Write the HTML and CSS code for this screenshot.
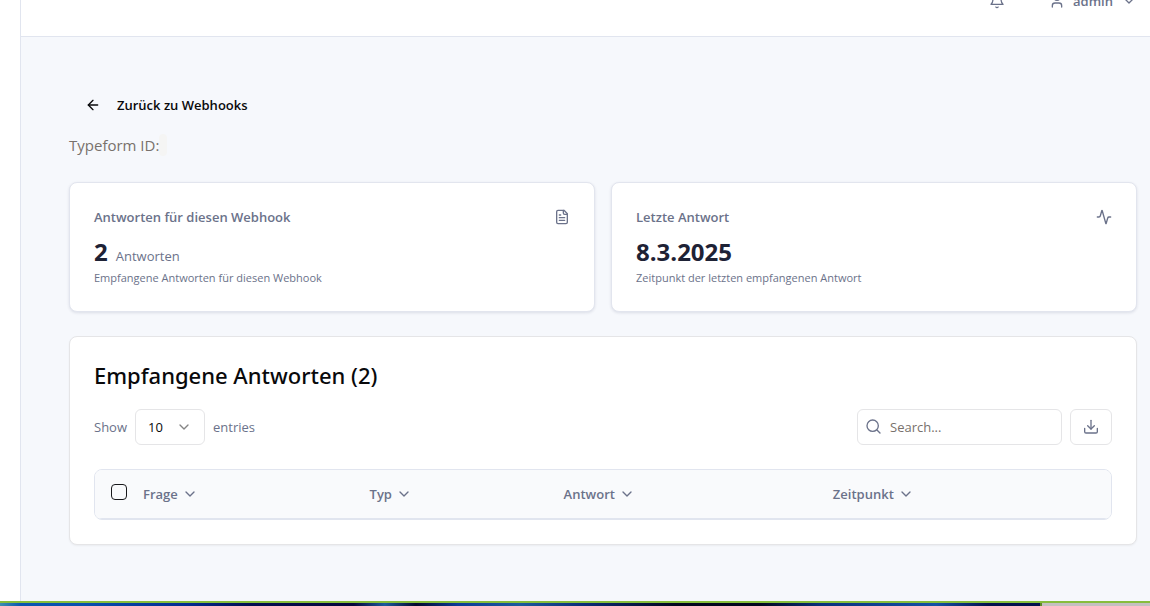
FILE: index.html
```html
<!DOCTYPE html>
<html lang="de">
<head>
<meta charset="utf-8">
<meta name="viewport" content="width=device-width, initial-scale=1">
<title>Webhook Antworten</title>
<link rel="stylesheet" href="styles.css">
</head>
<body>
<div class="app">
  <aside class="sidebar"></aside>
  <div class="content">
    <header class="topbar">
      <button class="bell" type="button" aria-label="Benachrichtigungen">
        <svg class="icon" viewBox="0 0 24 24"><path d="M6 8a6 6 0 0 1 12 0c0 7 3 9 3 9H3s3-2 3-9"/><path d="M10.3 21a1.94 1.94 0 0 0 3.4 0"/></svg>
      </button>
      <button class="user" type="button">
        <svg class="icon" viewBox="0 0 24 24"><path d="M19 21v-2a4 4 0 0 0-4-4H9a4 4 0 0 0-4 4v2"/><circle cx="12" cy="7" r="4"/></svg>
        <span>admin</span>
        <svg class="icon" viewBox="0 0 24 24"><path d="m6 9 6 6 6-6"/></svg>
      </button>
    </header>
    <main class="page">
      <a class="back" href="#">
        <svg class="icon" viewBox="0 0 24 24"><path d="m12 19-7-7 7-7"/><path d="M19 12H5"/></svg>
        <span>Zurück zu Webhooks</span>
      </a>
      <p class="form-id">Typeform ID:<code class="code"></code></p>
      <section class="stats">
        <article class="card stat">
          <div class="stat-head">
            <h3 class="stat-title">Antworten für diesen Webhook</h3>
            <svg class="icon" viewBox="0 0 24 24"><path d="M15 2H6a2 2 0 0 0-2 2v16a2 2 0 0 0 2 2h12a2 2 0 0 0 2-2V7Z"/><path d="M14 2v4a2 2 0 0 0 2 2h4"/><path d="M10 9H8"/><path d="M16 13H8"/><path d="M16 17H8"/></svg>
          </div>
          <div class="stat-value"><strong class="number">2</strong><span class="unit">Antworten</span></div>
          <p class="stat-note">Empfangene Antworten für diesen Webhook</p>
        </article>
        <article class="card stat">
          <div class="stat-head">
            <h3 class="stat-title">Letzte Antwort</h3>
            <svg class="icon" viewBox="0 0 24 24"><path d="M22 12h-2.48a2 2 0 0 0-1.93 1.46l-2.35 8.36a.25.25 0 0 1-.48 0L9.24 2.18a.25.25 0 0 0-.48 0l-2.35 8.36A2 2 0 0 1 4.49 12H2"/></svg>
          </div>
          <div class="stat-value"><strong class="number">8.3.2025</strong></div>
          <p class="stat-note">Zeitpunkt der letzten empfangenen Antwort</p>
        </article>
      </section>
      <section class="card answers">
        <h2 class="title">Empfangene Antworten (2)</h2>
        <div class="tools">
          <div class="length">
            <label for="length">Show</label>
            <span class="select">
              <select id="length"><option>10</option><option>25</option><option>50</option></select>
              <svg class="icon" viewBox="0 0 24 24"><path d="m6 9 6 6 6-6"/></svg>
            </span>
            <span>entries</span>
          </div>
          <div class="actions">
            <label class="search">
              <svg class="icon" viewBox="0 0 24 24"><circle cx="10" cy="10" r="8.500"/><path d="m21 21-4.500-4.500"/></svg>
              <input type="search" placeholder="Search..." aria-label="Search">
            </label>
            <button class="download" type="button" aria-label="Download">
              <svg class="icon" viewBox="0 0 24 24"><path d="M21.500 14v5a2 2 0 0 1-2 2h-15a2 2 0 0 1-2-2v-5"/><path d="m7 10 5 5 5-5"/><path d="M12 15V2"/></svg>
            </button>
          </div>
        </div>
        <div class="table-wrap">
          <table class="table">
            <colgroup><col class="col-check"><col class="col-question"><col class="col-type"><col class="col-answer"><col></colgroup>
            <thead>
              <tr>
                <th class="check"><input type="checkbox" aria-label="Alle auswählen"></th>
                <th><button class="sort" type="button">Frage <svg class="icon" viewBox="0 0 24 24"><path d="m6 9 6 6 6-6"/></svg></button></th>
                <th><button class="sort" type="button">Typ <svg class="icon" viewBox="0 0 24 24"><path d="m6 9 6 6 6-6"/></svg></button></th>
                <th><button class="sort" type="button">Antwort <svg class="icon" viewBox="0 0 24 24"><path d="m6 9 6 6 6-6"/></svg></button></th>
                <th><button class="sort" type="button">Zeitpunkt <svg class="icon" viewBox="0 0 24 24"><path d="m6 9 6 6 6-6"/></svg></button></th>
              </tr>
            </thead>
          </table>
        </div>
      </section>
    </main>
  </div>
</div>
<footer class="strip"><div class="strip-photo"></div><div class="strip-end"></div></footer>
</body>
</html>
```
FILE: styles.css
```css
* { box-sizing: border-box; }

body {
  margin: 0;
  display: flex;
  flex-direction: column;
  height: 100vh;
  overflow: hidden;
  background: #fff;
  color: #1e2235;
  font-family: "Segoe UI", "Open Sans", "Noto Sans", sans-serif;
  font-size: 13px;
  line-height: 20px;
}

h2, h3, p { margin: 0; }

button, input, select {
  margin: 0;
  padding: 0;
  border: 0;
  background: none;
  color: inherit;
  font: inherit;
}

.icon {
  width: 16px;
  height: 16px;
  flex: none;
  fill: none;
  stroke: currentColor;
  stroke-width: 2;
  stroke-linecap: round;
  stroke-linejoin: round;
}

.app {
  flex: 1;
  min-height: 0;
  display: flex;
  overflow: hidden;
}

.sidebar {
  width: 21px;
  flex: none;
  border-right: 1px solid #e1e5ef;
}

.content {
  flex: 1;
  min-width: 0;
  margin-top: -34px;
  background: #f6f8fc;
}

.topbar {
  display: flex;
  align-items: center;
  justify-content: flex-end;
  gap: 44px;
  height: 71px;
  padding-right: 13px;
  border-bottom: 1px solid #e1e5ef;
  background: #fff;
  color: #6b728a;
}

.bell { display: flex; }

.user {
  display: flex;
  align-items: center;
  gap: 8px;
  font-weight: 600;
}

.page { padding: 48px 13px 48px 48px; }

.back {
  display: flex;
  align-items: center;
  gap: 16px;
  width: max-content;
  height: 40px;
  padding: 0 16px;
  color: #09090b;
  font-weight: 600;
  text-decoration: none;
}

.form-id {
  display: flex;
  align-items: center;
  height: 24px;
  margin-top: 8px;
  color: #78716c;
  font-size: 15px;
}

.code {
  width: 8px;
  height: 22px;
  border-radius: 4px;
  background: #f5f5f4;
}

.card {
  border: 1px solid #e2e5ee;
  border-radius: 8px;
  background: #fff;
}

.stats {
  display: grid;
  grid-template-columns: 1fr 1fr;
  gap: 16px;
  margin-top: 25px;
}

.stat {
  padding: 24px;
  box-shadow: 0 1px 3px rgba(30, 40, 80, 0.12);
  color: #6b728a;
}

.stat-head {
  display: flex;
  align-items: center;
  justify-content: space-between;
}

.stat-title {
  font-size: 13px;
  font-weight: 600;
}

.stat-value {
  display: flex;
  align-items: baseline;
  gap: 8px;
  margin-top: 8px;
}

.number {
  color: #1e2235;
  font-size: 24px;
  font-weight: 700;
  line-height: 34px;
}

.unit { font-size: 13px; }

.stat-note {
  font-size: 11px;
  line-height: 18px;
}

.answers {
  margin-top: 24px;
  padding: 24px;
  border-color: #e5e5e7;
  box-shadow: 0 1px 2px rgba(0, 0, 0, 0.05);
}

.title {
  color: #09090b;
  font-family: "Segoe UI", "Noto Sans", sans-serif;
  font-size: 22px;
  font-weight: 500;
  line-height: 28px;
}

.tools {
  display: flex;
  align-items: center;
  justify-content: space-between;
  margin-top: 20px;
  color: #6b728a;
}

.length, .actions {
  display: flex;
  align-items: center;
  gap: 8px;
}

.select {
  display: grid;
  align-items: center;
  width: 70px;
  height: 36px;
}

.select select, .select .icon { grid-area: 1 / 1; }

.select select {
  width: 100%;
  height: 36px;
  padding: 0 12px;
  border: 1px solid #e5e5e7;
  border-radius: 6px;
  appearance: none;
  color: #09090b;
}

.select .icon {
  justify-self: end;
  margin-right: 13px;
  color: #858585;
  pointer-events: none;
}

.search {
  display: flex;
  align-items: center;
  gap: 8px;
  width: 205px;
  height: 36px;
  padding: 0 8px;
  border: 1px solid #e5e5e7;
  border-radius: 6px;
}

.search input {
  flex: 1;
  min-width: 0;
  outline: 0;
}

.search input::placeholder { color: #78716c; opacity: 1; }

.download {
  display: flex;
  align-items: center;
  justify-content: center;
  width: 42px;
  height: 36px;
  border: 1px solid #e5e5e7;
  border-radius: 6px;
}

.table-wrap {
  overflow: hidden;
  margin-top: 24px;
  border: 1px solid #e1e5ef;
  border-radius: 8px;
}

.table {
  width: 100%;
  border-collapse: collapse;
  table-layout: fixed;
  background: #f9fafc;
  color: #6b728a;
}

.col-check { width: 36px; }
.col-question { width: 22.3%; }
.col-type { width: 19.1%; }
.col-answer { width: 26.5%; }

.table th {
  height: 48px;
  padding: 0 12px;
  border-bottom: 1px solid #e1e5ef;
  text-align: left;
}

.table .check { padding: 0 0 4px 16px; }

.check input {
  display: block;
  appearance: none;
  width: 16px;
  height: 16px;
  border: 1px solid #18181b;
  border-radius: 4px;
}

.sort {
  display: flex;
  align-items: center;
  gap: 4px;
  font-weight: 600;
}

.strip {
  flex: none;
  display: flex;
  height: 5px;
  border-top: 2px solid #87bd3c;
}

.strip-photo {
  flex: 1;
  background: linear-gradient(90deg, #3c8fb0 0, #0a55b0 2%, #0750ae 8%, #022a90 18%, #020d50 24%, #05053a 34%, #1c5a9c 37%, #02082c 40%, #0b3a96 44%, #1c5a9c 50%, #0a2c78 56%, #02041c 65%, #02041c 73%, #08307c 79%, #1450a4 90%, #02104c 95%, #02104c 100%);
}

.strip-end {
  width: 110px;
  border-left: 2px solid #5f8a2a;
  background: #c4c0c0;
}
```
